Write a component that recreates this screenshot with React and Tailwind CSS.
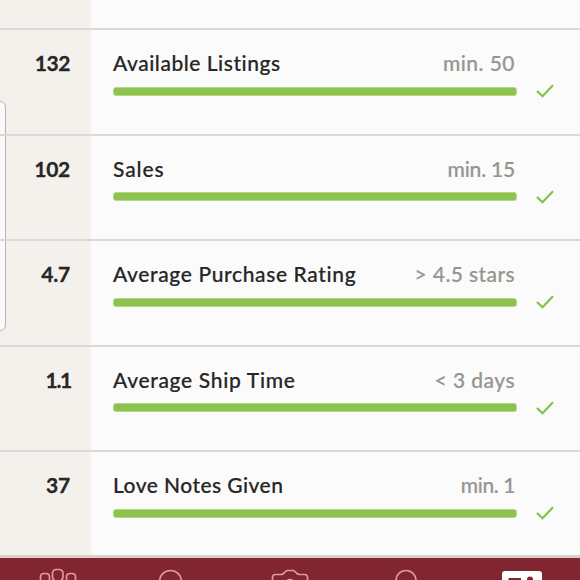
const rows = [
  { value: '132', label: 'Available Listings', goal: 'min. 50', vs: 'tracking-[-0.4px]', ls: 'tracking-[0.53px]', gs: 'tracking-[0.45px]' },
  { value: '102', label: 'Sales', goal: 'min. 15', vs: 'tracking-[-0.3px]', ls: 'tracking-[0.9px]', gs: 'tracking-[-0.2px]' },
  { value: '4.7', label: 'Average Purchase Rating', goal: '> 4.5 stars', vs: 'tracking-[-0.2px]', ls: 'tracking-[0.63px]', gs: 'tracking-[0.4px]' },
  { value: '1.1', label: 'Average Ship Time', goal: '< 3 days', vs: 'tracking-[-1.3px] mr-[-1px]', ls: 'tracking-[0.68px]', gs: 'tracking-[0.45px]' },
  { value: '37', label: 'Love Notes Given', goal: 'min. 1', vs: 'tracking-[-0.2px]', ls: 'tracking-[0.45px]', gs: 'tracking-[-0.4px]' },
];

function Row({ value, label, goal, vs, ls, gs }) {
  return (
    <div className="flex h-[105.5px] border-t-2 border-[#dad9d6]">
      <div className="w-[91px] shrink-0 pr-[21px] pt-[18px] text-right text-[21px] leading-[30px] font-bold [-webkit-text-stroke:0.3px]">
        <span className={vs}>{value}</span>
      </div>
      <div className="w-[404px] ml-[22px] shrink-0 pt-[18px]">
        <div className="flex justify-between pr-[2px] text-[21px] leading-[30px] font-medium whitespace-nowrap [-webkit-text-stroke:0.2px]">
          <span className={ls}>{label}</span>
          <span className={'text-[#979590] ' + gs}>{goal}</span>
        </div>
        <div className="mt-[8.6px] h-[9px] rounded-[3px] border border-[#b4d68c] bg-[#8bc34c]" />
      </div>
      <svg className="ml-[19px] mt-[54px] h-[14px] w-[18px] shrink-0" viewBox="0 0 18 14" fill="none" stroke="#82c24a" strokeWidth="2.2">
        <path d="M1 7 L6.5 12.3 L17 1.3" />
      </svg>
    </div>
  );
}

export default function App() {
  return (
    <div className="relative flex h-[580px] w-[580px] flex-col overflow-hidden bg-[linear-gradient(to_right,#f4f1ec_91px,#fbfbfb_91px)] font-['Lato','Liberation_Sans',sans-serif] text-[#262626]">
      <div className="absolute left-[-20px] top-[101px] h-[230px] w-[25.5px] rounded-[6px] border border-[#b5b3b0] bg-[#fafafa]" />
      <div className="relative flex flex-col pt-[28px]">
        {rows.map((r) => <Row key={r.label} {...r} />)}
      </div>
      <div className="absolute bottom-0 left-0 h-[25px] w-full border-t-[3px] border-[#dccfca] bg-[#812531]">
        <svg className="block h-[22px] w-[580px]" viewBox="0 558 580 22" fill="none" stroke="#dd9aa3" strokeWidth="1.7">
          <path d="M40.5 582V577Q40.5 573.5 44 573.5H46Q49.5 573.5 49.5 577V582" />
          <path d="M52.5 577V573.5Q52.5 569.5 56.5 569.5H59Q63 569.5 63 573.5V577Q63 579 61 580M52.5 577Q52.5 579 54.5 580" />
          <path d="M66.5 582V577Q66.5 573.5 70 573.5H72Q75.5 573.5 75.5 577V582" />
          <circle cx="170.5" cy="581.5" r="11" />
          <path d="M272.5 582V577.5Q272.5 574.5 275.5 574.5H281Q283 574.5 284 573L285.5 571.5Q286.5 570.5 288 570.5H292.5Q294 570.5 295 571.5L296.5 573Q297.5 574.5 299.5 574.5H304.5Q307.5 574.5 307.5 577.5V582" />
          <circle cx="290" cy="584" r="4.5" />
          <circle cx="406" cy="580.5" r="10" />
          <rect x="502" y="571" width="40" height="20" rx="3" fill="#fff" stroke="none" />
          <rect x="508.5" y="578" width="12.5" height="2" fill="#812531" stroke="none" />
          <circle cx="530" cy="579.5" r="3" fill="#812531" stroke="none" />
        </svg>
      </div>
    </div>
  );
}
